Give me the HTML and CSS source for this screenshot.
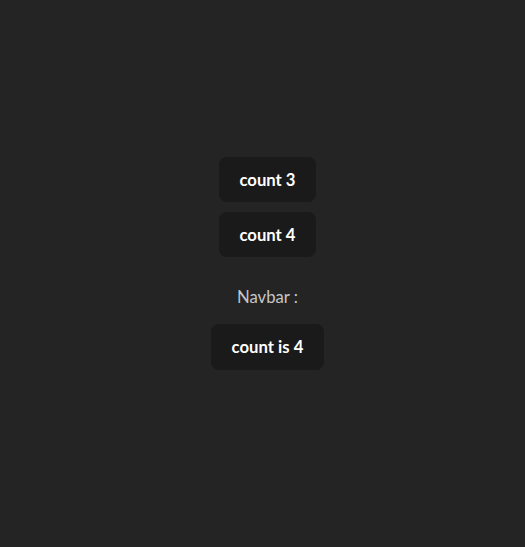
FILE: index.html
```html
<!DOCTYPE html>
<html>
<head>
<meta charset="utf-8">
<link rel="stylesheet" href="styles.css">
</head>
<body>
<div class="app">
  <button class="btn">count 3</button>
  <button class="btn">count 4</button>
  <div class="navbar">Navbar :</div>
  <button class="btn">count is 4</button>
</div>
</body>
</html>
```
FILE: styles.css
```css
html, body {
  margin: 0;
  padding: 0;
  background: #242424;
  height: 100%;
}
body {
  font-family: "Lato", "Open Sans", sans-serif;
  line-height: 1.5;
  color: rgba(255,255,255,0.87);
}
.app {
  display: flex;
  flex-direction: column;
  align-items: center;
  padding-top: 157px;
  padding-left: 10px;
}
.btn {
  font-family: inherit;
  font-size: 16.7px;
  font-weight: 700;
  line-height: 24px;
  color: #fff;
  background: #1a1a1a;
  border: 1px solid transparent;
  border-radius: 8px;
  padding: 9.6px 19.2px;
  margin: 0 0 10px 0;
  cursor: pointer;
}
.navbar {
  margin: 18px 0 15px;
  font-size: 16.7px;
  line-height: 24px;
  color: #c6c6c6;
}
```
